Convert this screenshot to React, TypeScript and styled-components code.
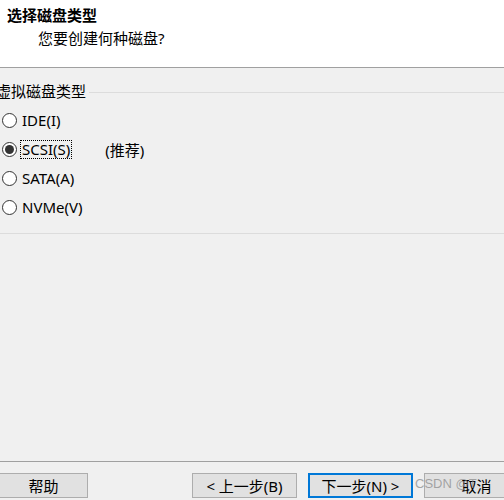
import React from "react";
import styled, { createGlobalStyle } from "styled-components";

const GlobalStyle = createGlobalStyle`
  html, body {
    margin: 0;
    padding: 0;
    background: #f0f0f0;
  }
  body {
    font-family: "Noto Sans", "Noto Sans CJK SC", sans-serif;
    font-size: 15px;
    color: #000;
  }
`;

const Wizard = styled.div`
  position: relative;
  width: 504px;
  height: 500px;
  display: flex;
  flex-direction: column;
  overflow: hidden;
  background: #f0f0f0;
`;

const Header = styled.div`
  height: 68px;
  box-sizing: border-box;
  padding-top: 5px;
  background: #fff;
  border-bottom: 1px solid #a0a0a0;
  flex-shrink: 0;
`;

const Title = styled.div`
  padding-left: 7px;
  font-weight: bold;
  line-height: 20px;
`;

const Subtitle = styled.div`
  margin-top: 3px;
  padding-left: 38px;
  line-height: 20px;
`;

const Body = styled.div`
  flex: 1;
  padding-top: 13px;
`;

const GroupBox = styled.div`
  margin-left: -4px;
  margin-right: -10px;
  padding-bottom: 11px;
  border-bottom: 1px solid #dcdcdc;
`;

const Legend = styled.div`
  display: flex;
  align-items: center;
  height: 20px;
  line-height: 20px;
`;

const LegendRule = styled.div`
  flex: 1;
  height: 1px;
  margin-left: 3px;
  margin-top: 2px;
  background: #dcdcdc;
`;

const Options = styled.div`
  padding-top: 5px;
  padding-left: 6px;
`;

const OptionRow = styled.label`
  display: flex;
  align-items: center;
  height: 29px;
`;

const RadioCircle = styled.span<{ $checked?: boolean }>`
  width: 15px;
  height: 15px;
  box-sizing: border-box;
  border: 1px solid #333;
  border-radius: 50%;
  background: #fff;
  display: flex;
  align-items: center;
  justify-content: center;
  flex-shrink: 0;

  &::after {
    content: "";
    width: 9px;
    height: 9px;
    border-radius: 50%;
    background: ${(p) => (p.$checked ? "#333" : "transparent")};
  }
`;

const OptionText = styled.span<{ $focused?: boolean }>`
  margin-left: 4px;
  padding: 0 1px;
  line-height: 17px;
  outline: ${(p) => (p.$focused ? "1px dotted #000" : "none")};
`;

const Note = styled.span`
  margin-left: 34px;
`;

const Footer = styled.div`
  flex-shrink: 0;
  height: 39px;
  box-sizing: border-box;
  border-top: 1px solid #a0a0a0;
  padding-top: 11px;
  display: flex;
`;

const ButtonGroup = styled.div`
  display: flex;
  gap: 11px;
  margin-left: 104px;
`;

const Button = styled.button<{ $default?: boolean; $w?: number }>`
  flex-shrink: 0;
  width: ${(p) => p.$w ?? 105}px;
  height: 25px;
  box-sizing: border-box;
  padding: 0;
  font-family: inherit;
  font-size: 15px;
  color: #000;
  background: #e1e1e1;
  border: ${(p) => (p.$default ? "2px solid #0078d7" : "1px solid #adadad")};
  line-height: 20px;
`;

const HelpButton = styled(Button)`
  margin-left: -1px;
`;

const Watermark = styled.div`
  position: absolute;
  left: 415px;
  top: 476px;
  font-family: "Liberation Sans", sans-serif;
  font-size: 13px;
  line-height: 16px;
  color: rgba(140, 140, 140, 0.75);
  pointer-events: none;
  white-space: nowrap;
`;

const options = [
  { key: "ide", label: "IDE(I)" },
  { key: "scsi", label: "SCSI(S)", checked: true, note: "(推荐)" },
  { key: "sata", label: "SATA(A)" },
  { key: "nvme", label: "NVMe(V)" },
];

export default function App() {
  return (
    <Wizard>
      <GlobalStyle />
      <Header>
        <Title>选择磁盘类型</Title>
        <Subtitle>您要创建何种磁盘?</Subtitle>
      </Header>
      <Body>
        <GroupBox>
          <Legend>
            <span>虚拟磁盘类型</span>
            <LegendRule />
          </Legend>
          <Options>
            {options.map((o) => (
              <OptionRow key={o.key}>
                <RadioCircle $checked={o.checked} />
                <OptionText $focused={o.checked}>{o.label}</OptionText>
                {o.note && <Note>{o.note}</Note>}
              </OptionRow>
            ))}
          </Options>
        </GroupBox>
      </Body>
      <Footer>
        <HelpButton $w={89}>帮助</HelpButton>
        <ButtonGroup>
          <Button>&lt; 上一步(B)</Button>
          <Button $default>下一步(N) &gt;</Button>
          <Button>取消</Button>
        </ButtonGroup>
      </Footer>
      <Watermark>CSDN @T</Watermark>
    </Wizard>
  );
}
